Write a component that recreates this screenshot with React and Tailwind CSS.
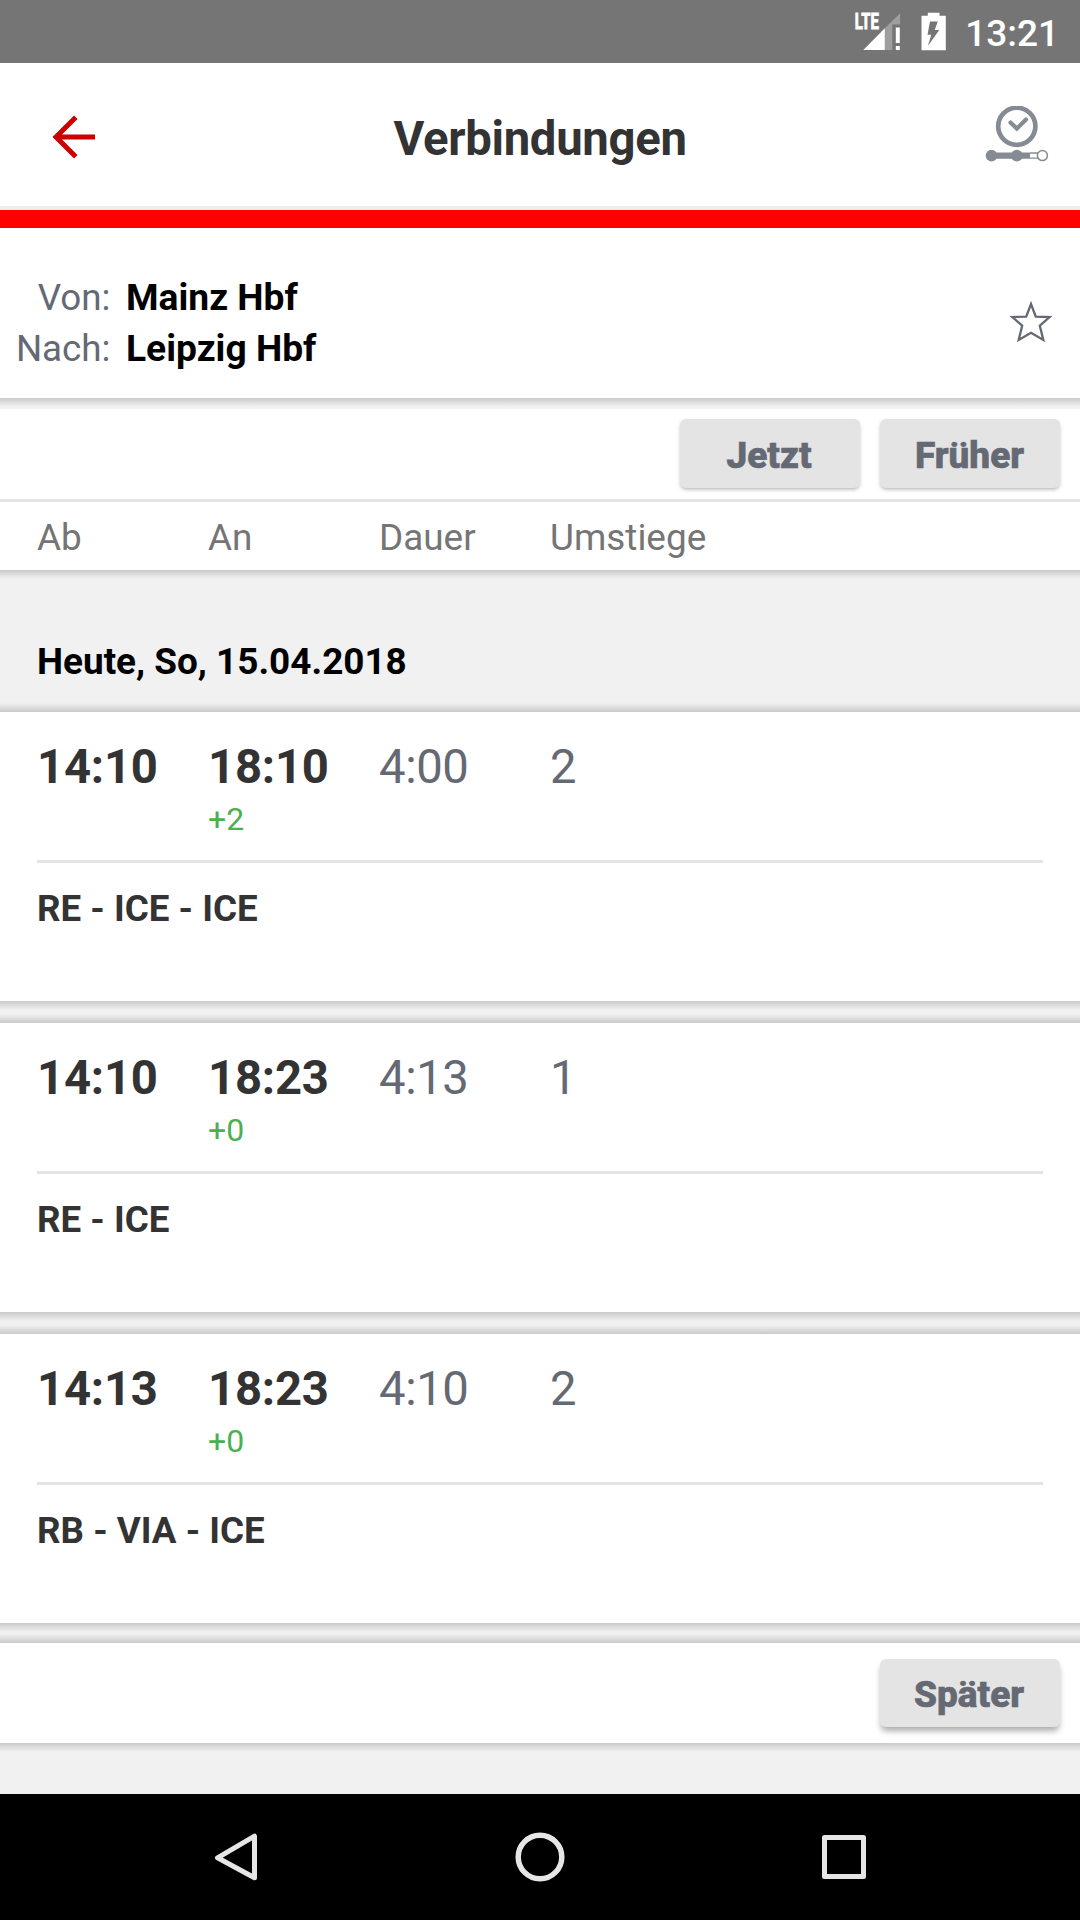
const connections = [
  { dep: '14:10', arr: '18:10', delay: '+2', duration: '4:00', changes: '2', trains: 'RE - ICE - ICE' },
  { dep: '14:10', arr: '18:23', delay: '+0', duration: '4:13', changes: '1', trains: 'RE - ICE' },
  { dep: '14:13', arr: '18:23', delay: '+0', duration: '4:10', changes: '2', trains: 'RB - VIA - ICE' },
];

function StatusBar() {
  return (
    <div className="flex h-[63px] items-center justify-end bg-[#757575] pr-[21px]">
      <svg width="48" height="54" viewBox="0 -7 48 54" className="mr-[19px]">
        <text x="0.8" y="17.3" textLength="24" lengthAdjust="spacingAndGlyphs" fill="#fff" stroke="#fff" strokeWidth="0.9" fontFamily="Roboto, sans-serif" fontWeight="700" fontSize="22">LTE</text>
        <path d="M30.8 16.3 46.1 1.2V12.5H38.3V38H30.8Z" fill="#fff" fillOpacity="0.3" />
        <path d="M9.3 38 30.8 16.3V38Z" fill="#fff" />
        <path d="M41.8 15.5H45.8V31H41.8ZM41.8 34H45.8V38H41.8Z" fill="#fff" />
      </svg>
      <svg width="26" height="40" viewBox="0 0 26 40" className="mr-[18px]">
        <path d="M6.8 0.7H18.5V3.7H24.8V38.3H0.5V3.7H6.8Z" fill="#fff" />
        <path d="M9 9.5H16.8L13.7 18H18.3L6.8 34 10.3 22.7H6.5Z" fill="#757575" />
      </svg>
      <span className="pt-[4px] text-[37px] leading-[44px] font-medium text-white">13:21</span>
    </div>
  );
}

function Header() {
  return (
    <div className="grid h-[147px] grid-cols-[1fr_auto_1fr] items-center border-b-4 border-[#eeeeee]">
      <svg width="64" height="48" viewBox="0 0 64 48" className="ml-[52px]" fill="none" stroke="#cc0000" strokeWidth="5">
        <path d="M43 26H4M23.8 6.2 4 26 23.8 45.8" />
      </svg>
      <h1 className="pt-[9px] text-[47.25px] leading-[56px] font-bold tracking-[-0.3px] text-[#333333]">Verbindungen</h1>
      <svg width="64" height="58" viewBox="0 0 64 58" className="mr-[31px] justify-self-end" fill="none" stroke="#858b94">
        <circle cx="31.8" cy="20.3" r="18.6" strokeWidth="4.7" />
        <path d="M25.5 16.6 31.8 22.6 41 13.4" strokeWidth="4.2" strokeLinecap="round" />
        <path d="M6.5 49.6H45" strokeWidth="6.2" />
        <circle cx="6.5" cy="49.6" r="5.8" fill="#858b94" stroke="none" />
        <circle cx="31.8" cy="49.6" r="5.9" fill="#858b94" stroke="none" />
        <path d="M45 47H53M45 52.2H53" strokeWidth="1.3" />
        <circle cx="57.4" cy="49.6" r="5" strokeWidth="1.5" />
      </svg>
    </div>
  );
}

function Route() {
  return (
    <div className="flex h-[170px] items-start justify-between bg-white pt-[44px] pr-[27px]">
      <div className="grid grid-cols-[110.5px_auto] gap-x-[15.5px] text-[36.75px] leading-[51px]">
        <span className="text-right text-[#646973]">Von:</span>
        <span className="text-[37.2px] font-bold text-black">Mainz Hbf</span>
        <span className="text-right text-[#646973]">Nach:</span>
        <span className="text-[37.2px] font-bold text-black">Leipzig Hbf</span>
      </div>
      <svg width="44" height="44" viewBox="0 0 44 44" className="mt-[28px]" fill="none" stroke="#646973" strokeWidth="2.3">
        <path d="M22 4 26.8 16.6 40.6 17 30.8 25.6 34.3 40 22 32.8 9.7 40 13.2 25.6 3.4 17 17.2 16.6Z" />
      </svg>
    </div>
  );
}

function Card({ c }) {
  return (
    <div className="h-[289px] bg-white px-[37px] pt-[27px]">
      <div className="grid h-[124px] grid-cols-[171px_171px_171px_1fr] border-b-3 border-[#e4e4e4] text-[47.25px] leading-[56px] tracking-[-0.2px] text-[#646973]">
        <span className="font-bold text-[#333333]">{c.dep}</span>
        <div>
          <div className="font-bold text-[#333333]">{c.arr}</div>
          <div className="mt-[5px] text-[32px] leading-[38px] tracking-normal text-[#4caf50]">{c.delay}</div>
        </div>
        <span className="tracking-[-0.4px]">{c.duration}</span>
        <span>{c.changes}</span>
      </div>
      <div className="mt-[26px] text-[36.75px] leading-[40px] font-bold text-[#333333]">{c.trains}</div>
    </div>
  );
}

function Gap() {
  return (
    <div className="flex h-[22px] flex-col justify-between bg-[#f1f1f1]">
      <div className="h-[9px] bg-linear-to-b from-[#cacaca] to-[#f1f1f1]" />
      <div className="h-[9px] bg-linear-to-t from-[#cacaca] to-[#f1f1f1]" />
    </div>
  );
}

function NavBar() {
  return (
    <div className="flex h-[126px] items-center justify-between bg-black px-[211px]">
      <svg width="50" height="54" viewBox="0 0 50 54" fill="none" stroke="#e6e6e6" strokeWidth="5" strokeLinejoin="round">
        <path d="M43.5 5V46.6L6.5 26.6Z" transform="translate(0 1.2)" />
      </svg>
      <svg width="54" height="54" viewBox="0 0 54 54" fill="none" stroke="#e6e6e6" strokeWidth="5.5">
        <circle cx="27" cy="27" r="21.8" />
      </svg>
      <svg width="50" height="54" viewBox="0 0 50 54" fill="none" stroke="#e6e6e6" strokeWidth="5" strokeLinejoin="round">
        <rect x="5.5" y="7.5" width="39" height="39" />
      </svg>
    </div>
  );
}

export default function App() {
  return (
    <div className="flex h-[1920px] w-[1080px] flex-col overflow-hidden bg-white font-['Roboto',sans-serif]">
      <StatusBar />
      <Header />
      <div className="h-[18px] bg-[#ff0000]" />
      <Route />
      <div className="h-[11px] bg-linear-to-b from-[#cacaca] to-[#f3f3f3] to-80%" />
      <div className="flex h-[93px] justify-end gap-[20px] border-b-3 border-[#e4e4e4] pt-[10px] pr-[20px] text-[37px] text-[#646973]">
        <button className="h-[69px] w-[180px] rounded-[6px] bg-[#e4e4e4] pt-[4px] pr-[2px] font-extrabold shadow-[0_2px_4px_-1px_rgba(0,0,0,0.35)] [-webkit-text-stroke:0.7px_#646973]">Jetzt</button>
        <button className="h-[69px] w-[180px] rounded-[6px] bg-[#e4e4e4] pt-[4px] pr-[1px] font-extrabold shadow-[0_2px_4px_-1px_rgba(0,0,0,0.35)] [-webkit-text-stroke:0.7px_#646973]">Früher</button>
      </div>
      <div className="grid h-[68px] grid-cols-[171px_171px_171px_1fr] items-center px-[37px] pt-[3px] text-[36.9px] leading-[44px] text-[#757575]">
        <span>Ab</span>
        <span>An</span>
        <span>Dauer</span>
        <span>Umstiege</span>
      </div>
      <div className="flex h-[142px] flex-col bg-[#f1f1f1]">
        <div className="h-[9px] bg-linear-to-b from-[#cacaca] to-[#f1f1f1]" />
        <div className="flex-1 px-[37px] pt-[60px] text-[36.9px] leading-[46px] font-bold text-black">Heute, So, 15.04.2018</div>
        <div className="h-[9px] bg-linear-to-t from-[#cacaca] to-[#f1f1f1]" />
      </div>
      <Card c={connections[0]} />
      <Gap />
      <Card c={connections[1]} />
      <Gap />
      <Card c={connections[2]} />
      <div className="flex h-[20px] flex-col justify-between bg-[#f1f1f1]">
        <div className="h-[9px] bg-linear-to-b from-[#cacaca] to-[#f1f1f1]" />
        <div className="h-[9px] bg-linear-to-t from-[#cacaca] to-[#f1f1f1]" />
      </div>
      <div className="flex h-[100px] justify-end bg-white pt-[16px] pr-[20px]">
        <button className="h-[68px] w-[180px] rounded-[6px] bg-[#e4e4e4] pt-[3px] pr-[2px] text-[37px] font-extrabold text-[#646973] shadow-[0_5px_6px_-1px_rgba(0,0,0,0.33)] [-webkit-text-stroke:0.7px_#646973]">Später</button>
      </div>
      <div className="h-[51px] bg-[#f1f1f1]">
        <div className="h-[9px] bg-linear-to-b from-[#cacaca] to-[#f1f1f1]" />
      </div>
      <NavBar />
    </div>
  );
}
